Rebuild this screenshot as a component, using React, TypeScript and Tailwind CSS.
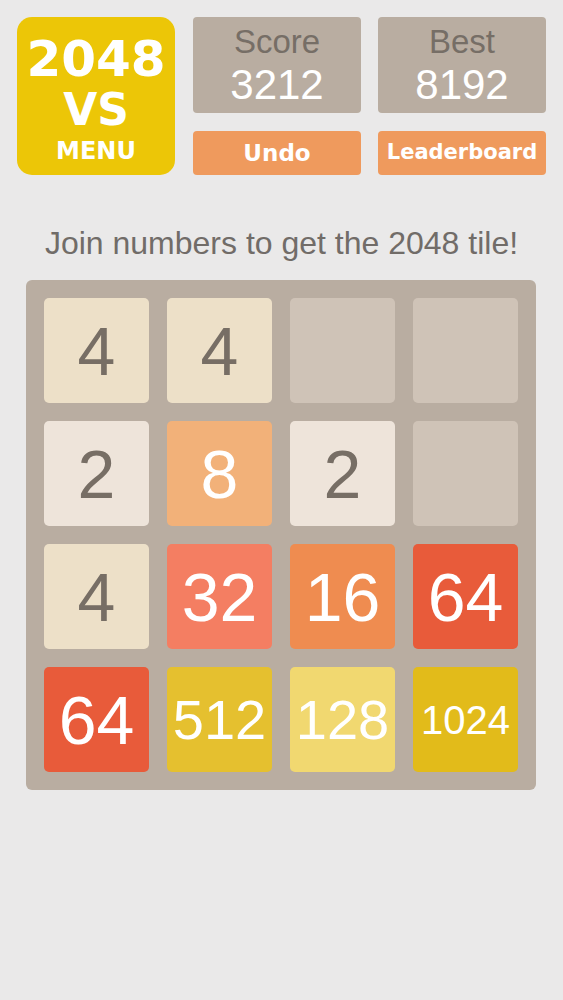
const tiles: (number | null)[] = [
  4, 4, null, null,
  2, 8, 2, null,
  4, 32, 16, 64,
  64, 512, 128, 1024,
];

const tileStyle: Record<number, string> = {
  2: 'bg-[#eee4da] text-[#776e65] text-[68px]',
  4: 'bg-[#ede0c8] text-[#776e65] text-[68px]',
  8: 'bg-[#f2b179] text-white text-[68px]',
  16: 'bg-[#ef8c50] text-white text-[68px]',
  32: 'bg-[#f47e62] text-white text-[68px]',
  64: 'bg-[#e85b3a] text-white text-[68px]',
  128: 'bg-[#f1d870] text-white text-[56px]',
  512: 'bg-[#e5c02f] text-white text-[56px]',
  1024: 'bg-[#e2bb1a] text-white text-[40px]',
};

function Tile({ value }: { value: number | null }) {
  if (value === null) {
    return <div className="rounded-[5px] bg-[#cfc3b7]" />;
  }
  return (
    <div
      className={`flex items-center justify-center rounded-[5px] font-['Liberation_Sans',Arial,sans-serif] ${tileStyle[value]}`}
    >
      {value}
    </div>
  );
}

function StatBox({ label, value }: { label: string; value: number }) {
  return (
    <div className="flex flex-col items-center rounded-[4px] bg-[#b9ada1] pt-[8px] font-['Liberation_Sans',Arial,sans-serif]">
      <span className="text-[33px] leading-none text-[#766e66]">{label}</span>
      <span className="mt-[6px] text-[42px] leading-none text-white">{value}</span>
    </div>
  );
}

export default function App() {
  return (
    <div className="min-h-[1000px] w-full bg-[#eae9e9]">
      <header className="flex gap-[18px] px-[17px] pt-[17px]">
        <button className="flex h-[158px] w-[158px] shrink-0 flex-col items-center rounded-[15px] bg-[#ecc607] pt-[17px] font-['DejaVu_Sans',sans-serif] font-bold text-white">
          <span className="text-[50px] leading-none">2048</span>
          <span className="mt-[4px] text-[44px] leading-none">VS</span>
          <span className="mt-[7px] text-[24px] leading-none">MENU</span>
        </button>

        <div className="grid flex-1 grid-cols-2 grid-rows-[96px_44px] gap-x-[17px] gap-y-[18px]">
          <StatBox label="Score" value={3212} />
          <StatBox label="Best" value={8192} />
          <button className="flex items-center justify-center rounded-[4px] bg-[#ef9a5d] font-['DejaVu_Sans',sans-serif] text-[23px] font-bold text-white">
            Undo
          </button>
          <button className="flex items-center justify-center rounded-[4px] bg-[#ef9a5d] font-['DejaVu_Sans',sans-serif] text-[21px] font-bold text-white">
            Leaderboard
          </button>
        </div>
      </header>

      <p className="mt-[50px] text-center font-['Liberation_Sans',Arial,sans-serif] text-[32px] leading-[36px] text-[#716c68]">
        Join numbers to get the 2048 tile!
      </p>

      <div className="ml-[26px] mt-[19px] grid h-[510px] w-[510px] grid-cols-4 grid-rows-4 gap-[18px] rounded-[6px] bg-[#b9ada1] p-[18px]">
        {tiles.map((v, i) => (
          <Tile key={i} value={v} />
        ))}
      </div>
    </div>
  );
}
